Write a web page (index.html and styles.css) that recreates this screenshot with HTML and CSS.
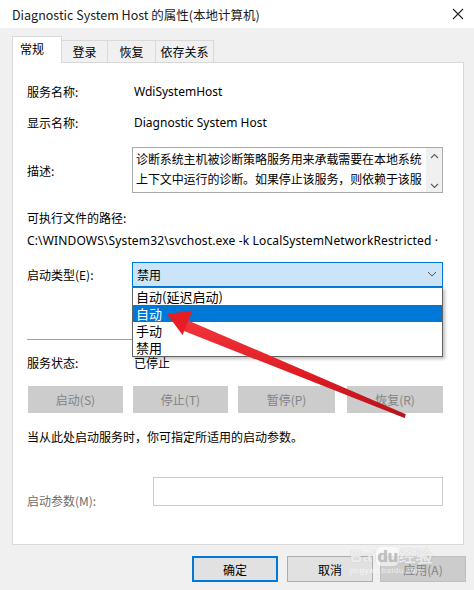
FILE: index.html
```html
<!DOCTYPE html>
<html>
<head>
<meta charset="utf-8">
<link rel="stylesheet" href="styles.css">
</head>
<body>
<div class="window">
  <div class="titlebar">
    <span class="title">Diagnostic System Host 的属性(本地计算机)</span>
    <svg class="close" width="12" height="12" viewBox="0 0 12 12"><path d="M1 1 L11 11 M11 1 L1 11" stroke="#222" stroke-width="1.1" fill="none"/></svg>
  </div>
  <div class="body">
    <div class="tabs">
      <div class="tab active">常规</div>
      <div class="tab t2">登录</div>
      <div class="tab t3">恢复</div>
      <div class="tab t4">依存关系</div>
    </div>
    <div class="panel">
      <div class="row r1"><span class="label">服务名称:</span><span class="value lat">WdiSystemHost</span></div>
      <div class="row r2"><span class="label">显示名称:</span><span class="value lat">Diagnostic System Host</span></div>
      <div class="row r3">
        <span class="label">描述:</span>
        <div class="desc">
          <div class="desc-text">诊断系统主机被诊断策略服务用来承载需要在本地系统上下文中运行的诊断。如果停止该服务，则依赖于该服</div>
          <div class="scroll">
            <svg width="9" height="6" viewBox="0 0 9 6"><path d="M1 5 L4.5 1.5 L8 5" stroke="#606060" stroke-width="1.2" fill="none"/></svg>
            <svg width="9" height="6" viewBox="0 0 9 6"><path d="M1 1 L4.5 4.5 L8 1" stroke="#606060" stroke-width="1.2" fill="none"/></svg>
          </div>
        </div>
      </div>
      <div class="path-label">可执行文件的路径:</div>
      <div class="path lat">C:\WINDOWS\System32\svchost.exe -k LocalSystemNetworkRestricted ·</div>
      <div class="row r4">
        <span class="label">启动类型(E):</span>
        <div class="combo-wrap">
          <div class="combo">
            <span>禁用</span>
            <svg width="10" height="6" viewBox="0 0 10 6"><path d="M1 1 L5 5 L9 1" stroke="#555" stroke-width="1" fill="none"/></svg>
          </div>
          <div class="dropdown">
            <div class="item">自动(延迟启动)</div>
            <div class="item selected">自动</div>
            <div class="item">手动</div>
            <div class="item">禁用</div>
          </div>
        </div>
      </div>
      <div class="sep"></div>
      <div class="row r5"><span class="label">服务状态:</span><span class="value">已停止</span></div>
      <div class="btnrow">
        <div class="btn dis b1">启动(S)</div>
        <div class="btn dis b2">停止(T)</div>
        <div class="btn dis b3">暂停(P)</div>
        <div class="btn dis b4">恢复(R)</div>
      </div>
      <div class="hint">当从此处启动服务时，你可指定所适用的启动参数。</div>
      <div class="row r6">
        <span class="label gray">启动参数(M):</span>
        <div class="param"></div>
      </div>
    </div>
    <div class="footer">
      <div class="fbtn ok">确定</div>
      <div class="fbtn">取消</div>
      <div class="fbtn dis">应用(A)</div>
    </div>
  </div>
  <div class="watermark"><span class="wm-big">Bai<span class="wm-du">du</span>经验</span><span class="wm-small">jingyan.baidu.com</span></div>
  <svg class="arrow" width="474" height="590" viewBox="0 0 474 590">
    <defs>
      <linearGradient id="rg" x1="0" y1="0" x2="0" y2="1">
        <stop offset="0" stop-color="#f2363d"/>
        <stop offset="0.55" stop-color="#e01c24"/>
        <stop offset="1" stop-color="#b5121a"/>
      </linearGradient>
    </defs>
    <polygon points="183.5,318.5 405.8,414.2 404.6,418 180.2,329.5" fill="url(#rg)"/>
    <polygon points="167,314 192.5,310.5 182.5,335" fill="#e61d25"/>
  </svg>
</div>
</body>
</html>
```
FILE: styles.css
```css
html, body {
  margin: 0;
  padding: 0;
}
* { box-sizing: border-box; }
body {
  width: 474px;
  height: 590px;
  overflow: hidden;
  font-family: "Noto Sans CJK SC", "Noto Sans", sans-serif;
  font-size: 12px;
  color: #000;
}
.window {
  position: relative;
  width: 474px;
  height: 590px;
  background: #f0f0f0;
}
.titlebar {
  height: 28px;
  background: #fff;
  display: flex;
  align-items: center;
  justify-content: space-between;
  padding: 0 10px 0 12px;
}
.title {
  font-size: 12.5px;
  color: #1a1a1a;
}
.lat {
  font-family: "Noto Sans", "Noto Sans CJK SC", sans-serif;
}
.body {
  padding: 8px 10px 0 12px;
}
.tabs {
  display: flex;
  align-items: flex-end;
  height: 26px;
}
.tab {
  height: 22px;
  border: 1px solid #d9d9d9;
  border-bottom: none;
  border-left: none;
  background: #f0f0f0;
  display: flex;
  align-items: center;
  justify-content: center;
  font-size: 12px;
  white-space: nowrap;
}
.tab.active {
  height: 27px;
  width: 50px;
  background: #fff;
  border-left: 1px solid #d9d9d9;
  position: relative;
  z-index: 1;
  justify-content: flex-start;
  padding: 0 0 0 7px;
  margin-bottom: -1px;
  align-items: flex-start;
  padding-top: 3px;
}
.t2 { width: 46px; }
.t3 { width: 48px; }
.t4 { width: 58px; }
.panel {
  height: 483px;
  background: #fff;
  border: 1px solid #d9d9d9;
  padding: 0 20px 0 14px;
  position: relative;
}
.row {
  display: flex;
  align-items: center;
}
.label {
  width: 106px;
  flex: none;
}
.label.gray { color: #6d6d6d; }
.r1 { margin-top: 18px; height: 20px; }
.r2 { margin-top: 11px; height: 20px; }
.r3 { margin-top: 15px; height: 46px; }
.value { padding-left: 1px; }
.desc {
  width: 311px;
  height: 46px;
  border: 1px solid #a9a9a9;
  display: flex;
  margin-left: -1px;
}
.desc-text {
  flex: 1;
  padding: 1px 2px 0 3px;
  line-height: 20px;
  height: 44px;
  overflow: hidden;
  letter-spacing: -0.1px;
}
.scroll {
  width: 16px;
  background: #f0f0f0;
  display: flex;
  flex-direction: column;
  justify-content: space-between;
  align-items: center;
  padding: 5px 0 3px;
}
.path-label { margin-top: 15px; height: 20px; line-height: 20px; }
.path { margin-top: 3px; height: 20px; line-height: 20px; white-space: nowrap; letter-spacing: 0.15px; }
.r4 { margin-top: 10px; height: 26px; }
.combo-wrap {
  position: relative;
  margin-left: -1px;
}
.combo {
  width: 311px;
  height: 25px;
  border: 1px solid #0078d7;
  background: #cce4f7;
  display: flex;
  align-items: center;
  justify-content: space-between;
  padding: 0 5px 0 4px;
}
.dropdown {
  position: absolute;
  left: 0;
  top: 25px;
  width: 311px;
  border: 1px solid #646464;
  background: #fff;
  box-shadow: 2px 2px 3px rgba(0,0,0,0.25);
  z-index: 5;
}
.item {
  height: 17px;
  line-height: 17px;
  padding-left: 3px;
  font-size: 13px;
}
.item.selected {
  background: #0078d7;
  color: #fff;
}
.sep {
  margin-top: 52px;
  height: 1px;
  background: #a0a0a0;
  width: 416px;
}
.r5 { margin-top: 12px; height: 20px; }
.btnrow {
  display: flex;
  margin-top: 14px;
  margin-left: 1px;
}
.btn {
  height: 27px;
  border: 1px solid #cccccc;
  background: #cccccc;
  color: #838383;
  display: flex;
  align-items: center;
  justify-content: center;
  font-size: 12px;
}
.b1 { width: 95px; }
.b2 { width: 95px; margin-left: 10px; }
.b3 { width: 97px; margin-left: 10px; }
.b4 { width: 96px; margin-left: 12px; }
.hint { margin-top: 14px; height: 20px; line-height: 20px; }
.r6 { margin-top: 30px; height: 31px; align-items: flex-start; }
.r6 .label { width: 126px; margin-top: 14px; line-height: 20px; }
.param {
  width: 291px;
  height: 29px;
  border: 1px solid #cccccc;
}
.footer {
  display: flex;
  justify-content: flex-end;
  margin-top: 11px;
  margin-right: -2px;
}
.fbtn {
  width: 86px;
  height: 26px;
  border: 1px solid #adadad;
  background: #e1e1e1;
  display: flex;
  align-items: center;
  justify-content: center;
  margin-left: 9px;
}
.fbtn.ok {
  border: 2px solid #0078d7;
  width: 86px;
}
.fbtn.dis {
  background: #cccccc;
  border-color: #bfbfbf;
  color: #838383;
  margin-left: 7px;
}
.watermark {
  position: absolute;
  left: 350px;
  top: 548px;
  display: flex;
  flex-direction: column;
  align-items: flex-start;
  pointer-events: none;
}
.wm-big {
  font-family: "Liberation Sans", sans-serif;
  font-size: 17px;
  font-weight: bold;
  color: rgba(255,255,255,0.75);
  text-shadow: 0 0 1px rgba(150,150,150,0.6);
  line-height: 18px;
}
.wm-du {
  background: rgba(255,255,255,0.6);
  border-radius: 6px;
  color: rgba(190,190,190,0.9);
  padding: 0 1px;
}
.wm-small {
  font-family: "Liberation Sans", sans-serif;
  font-size: 8px;
  color: rgba(255,255,255,0.7);
  letter-spacing: 0.5px;
}
.arrow {
  position: absolute;
  left: 0;
  top: 0;
  pointer-events: none;
  z-index: 10;
}
```
